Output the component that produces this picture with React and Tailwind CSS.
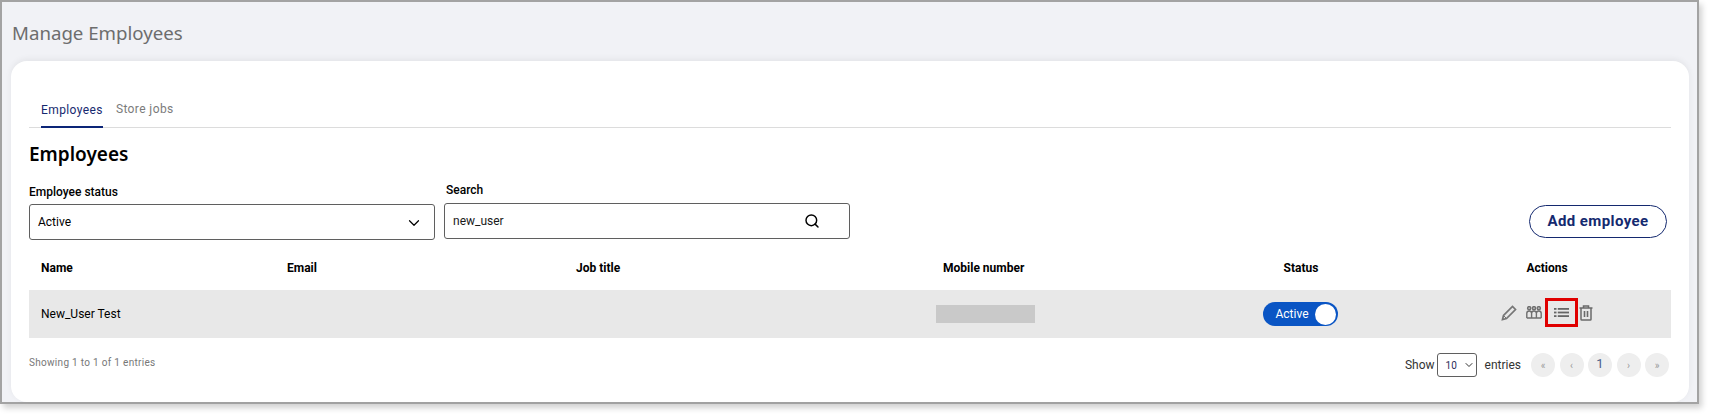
import { ChevronDown, Search } from "lucide-react";

const roboto = "font-['Roboto',sans-serif]";
const noto = "font-['Noto_Sans',sans-serif]";

function PencilIcon() {
  return (
    <svg width="16" height="16" viewBox="0 0 16 16" fill="none" stroke="#767676" strokeWidth="1.7">
      <path d="M1.5 14.5l1-4L11.5 1.5l3 3-9 9-4 1z" />
      <path d="M2.5 10.5l3 3" strokeWidth="1" />
    </svg>
  );
}

function GroupIcon() {
  return (
    <svg width="16" height="13" viewBox="0 0 16 13" fill="none" stroke="#6f6f6f" strokeWidth="1.4">
      <circle cx="3.2" cy="2.2" r="1.6" fill="#b5b5b5" />
      <circle cx="8" cy="2.2" r="1.6" fill="#b5b5b5" />
      <circle cx="12.8" cy="2.2" r="1.6" fill="#b5b5b5" />
      <path d="M.8 12V7.2C.8 5.8 1.8 5 3.2 5s2.4.8 2.4 2.2V12M5.6 7.2C5.6 5.8 6.6 5 8 5s2.4.8 2.4 2.2V12M10.4 7.2c0-1.4 1-2.2 2.4-2.2s2.4.8 2.4 2.2V12M.8 12h14.4" />
    </svg>
  );
}

function ListIcon() {
  return (
    <svg width="15" height="9" viewBox="0 0 15 9" fill="#666666">
      <rect x="0" y="0" width="2.5" height="1.8" />
      <rect x="0" y="3.6" width="2.5" height="1.8" />
      <rect x="0" y="7.2" width="2.5" height="1.8" />
      <rect x="3.8" y="0" width="11.2" height="1.8" />
      <rect x="3.8" y="3.6" width="11.2" height="1.8" />
      <rect x="3.8" y="7.2" width="11.2" height="1.8" />
    </svg>
  );
}

function TrashIcon() {
  return (
    <svg width="14" height="16" viewBox="0 0 14 16" fill="none" stroke="#6a6a6a" strokeWidth="1.5">
      <path d="M.5 3h13M4.5 3V1h5v2M2 3v11.2c0 .5.3.8.8.8h8.4c.5 0 .8-.3.8-.8V3" />
      <path d="M5.5 6v6M8.5 6v6" strokeWidth="1.6" />
    </svg>
  );
}

function PageButton({ children, active }) {
  return (
    <span
      className={`w-6 h-6 rounded-full bg-[#eeeeee] flex items-center justify-center ${
        active ? "text-[13px] text-[#4a5f8a] pb-[2px]" : "text-[10px] text-[#9a9a9a]"
      }`}
    >
      {children}
    </span>
  );
}

export default function App() {
  return (
    <div className={`w-[1711px] h-[416px] bg-white overflow-hidden ${roboto}`}>
      <div className="w-[1699px] h-[404px] bg-[#f1f2f6] border-2 border-[#a3a3a3] shadow-[3px_4px_6px_rgba(0,0,0,0.18)] pl-[9px] pr-[8px] flex flex-col">
        <h1 className={`h-[59px] pt-[18px] pl-px text-[18.67px] leading-[26px] text-[#6d6d6d] ${noto}`}>Manage Employees</h1>

        <div className="flex-1 bg-white rounded-[16px] shadow-[0_-2px_6px_rgba(0,0,0,0.06)] px-[18px]">
          {/* Tabs */}
          <div className="h-[67px] border-b border-[#dcdcdc] flex items-end pl-[12px] gap-[13px] text-[12px] tracking-[0.4px] leading-[20px]">
            <span className="h-[28px] border-b-2 border-[#0c2577] text-[#16296f] -mb-px">Employees</span>
            <span className="h-[28px] text-[#7b7b7b]">Store jobs</span>
          </div>

          <h2 className={`mt-[11px] text-[19px] leading-[30px] font-semibold text-black ${noto}`}>Employees</h2>

          {/* Filters */}
          <div className="flex items-end h-[70px] mt-[1px]">
            <div className="w-[406px]">
              <label className="block text-[12px] font-medium leading-[16px] mb-[4px] text-black">Employee status</label>
              <div className="h-[36px] border border-[#5f5f5f] rounded-[3px] flex items-center justify-between pl-[8px] pr-[11px] text-[12px] text-black">
                <span>Active</span>
                <ChevronDown size={18} strokeWidth={1.6} className="mt-[2px]" />
              </div>
            </div>
            <div className="w-[406px] ml-[9px] mb-px">
              <label className="block text-[12px] font-medium leading-[16px] mb-[5px] pl-[2px] text-black">Search</label>
              <div className="h-[36px] border border-[#5f5f5f] rounded-[3px] flex items-center justify-between pl-[8px] pr-[29px] text-[12px] text-[#1a1a1a]">
                <span>new_user</span>
                <Search size={16} strokeWidth={2.2} className="text-black" />
              </div>
            </div>
            <button className="ml-auto mr-[4px] mb-[2px] w-[138px] h-[33px] border border-[#14296f] rounded-full text-[15px] font-bold tracking-[0.4px] text-[#14296f]">
              Add employee
            </button>
          </div>

          {/* Table */}
          <div className="grid grid-cols-[246px_289px_367px_248px_244px_248px] h-[50px] items-center pt-[5px] text-[12px] font-bold text-black">
            <span className="pl-[12px]">Name</span>
            <span className="pl-[12px]">Email</span>
            <span className="pl-[12px]">Job title</span>
            <span className="pl-[12px]">Mobile number</span>
            <span className="text-center">Status</span>
            <span className="text-center">Actions</span>
          </div>
          <div className="grid grid-cols-[246px_289px_367px_248px_244px_248px] h-[48px] items-center bg-[#e8e8e8] text-[12px] text-black">
            <span className="pl-[12px] -mt-px">New_User Test</span>
            <span />
            <span />
            <span className="pl-[5px]">
              <span className="block w-[99px] h-[18px] bg-[#c9c9c9]" />
            </span>
            <span className="flex justify-center pr-[2px]">
              <span className="w-[75px] h-[24px] rounded-full bg-[#0a55c4] text-white flex items-center justify-between pl-[13px] pr-[2px] text-[12px]">
                Active
                <span className="w-[21px] h-[21px] rounded-full bg-white" />
              </span>
            </span>
            <span className="flex items-center pl-[78px] -mt-[3px]">
              <span className="w-[25px]"><PencilIcon /></span>
              <GroupIcon />
              <span className="ml-[3px] w-[33px] h-[29px] border-[3px] border-[#e00000] flex items-center justify-center pr-px"><ListIcon /></span>
              <span className="ml-px"><TrashIcon /></span>
            </span>
          </div>

          {/* Footer */}
          <div className="flex items-center justify-between h-[48px]">
            <span className="text-[10px] tracking-[0.3px] text-[#777777]">Showing 1 to 1 of 1 entries</span>
            <div className="flex items-center text-[12px] text-[#333333] mt-[6px]">
              <span>Show</span>
              <span className="ml-[2px] w-[40px] h-[24px] border border-[#5f5f5f] rounded-[3px] flex items-center justify-between pl-[8px] pr-[1px] text-[10px] text-[#2c2c5a]">
                10
                <ChevronDown size={12} strokeWidth={2} className="text-[#333333]" />
              </span>
              <span className="ml-[8px]">entries</span>
              <div className="flex gap-[4.5px] ml-[10px] mr-[2px]">
                <PageButton>«</PageButton>
                <PageButton>‹</PageButton>
                <PageButton active>1</PageButton>
                <PageButton>›</PageButton>
                <PageButton>»</PageButton>
              </div>
            </div>
          </div>
        </div>
      </div>
    </div>
  );
}
